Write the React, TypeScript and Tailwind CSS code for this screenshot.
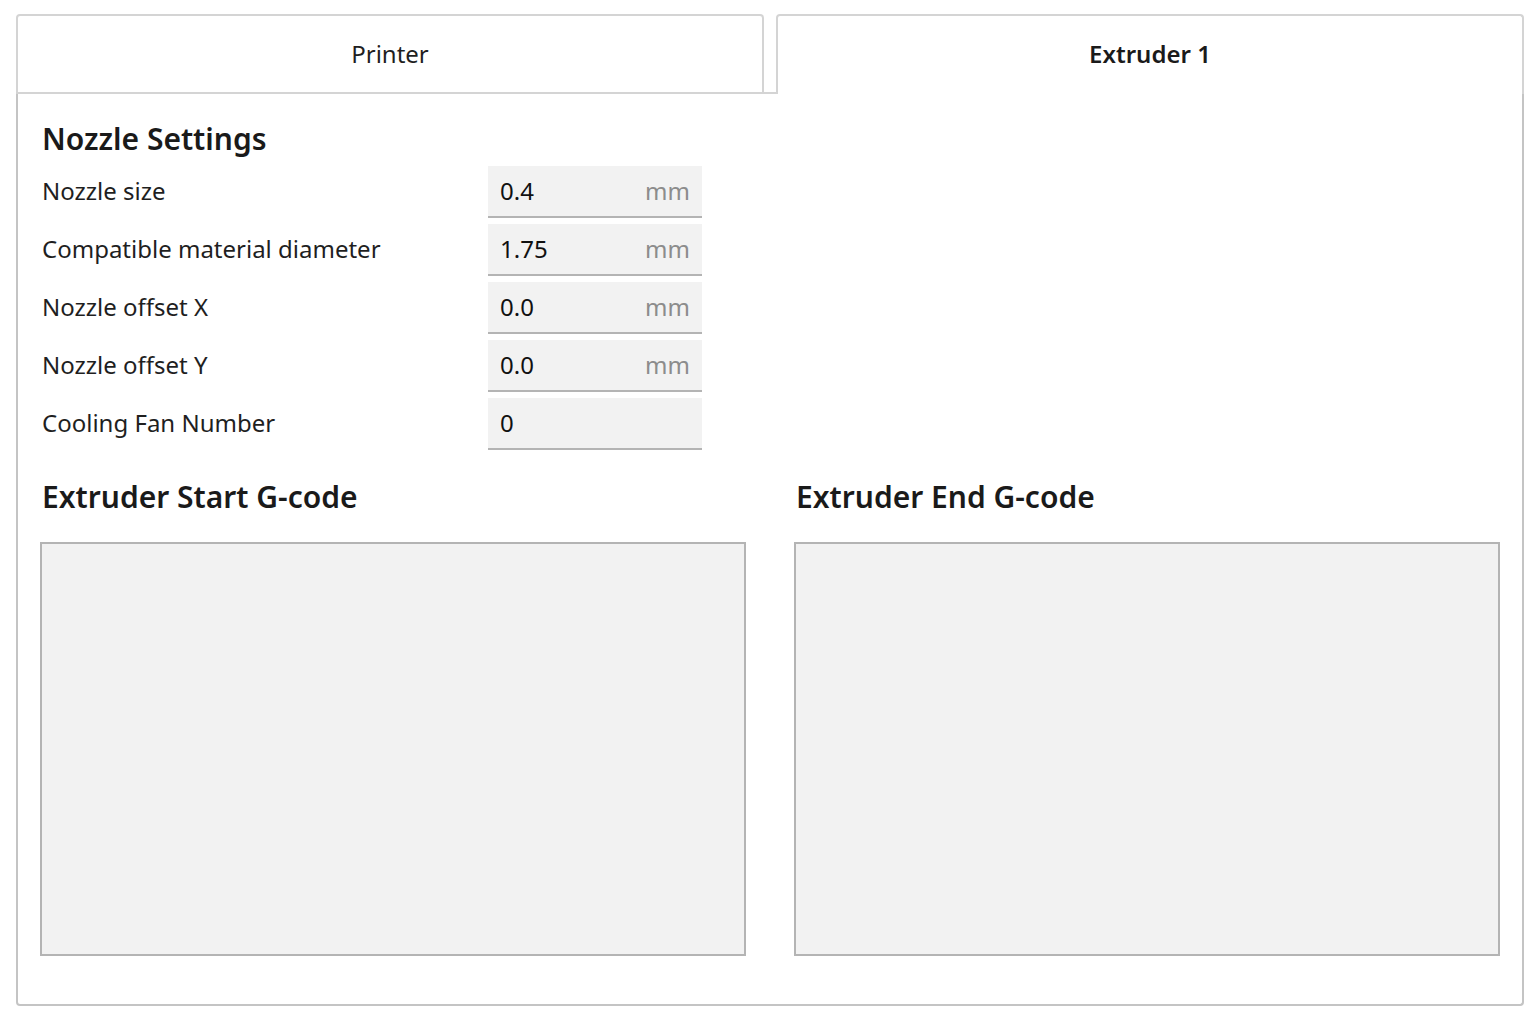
import React from 'react';

const nozzleRows = [
  { label: 'Nozzle size', value: '0.4', unit: 'mm' },
  { label: 'Compatible material diameter', value: '1.75', unit: 'mm' },
  { label: 'Nozzle offset X', value: '0.0', unit: 'mm' },
  { label: 'Nozzle offset Y', value: '0.0', unit: 'mm' },
  { label: 'Cooling Fan Number', value: '0', unit: '' },
];

function SettingRow({ label, value, unit }: { label: string; value: string; unit: string }) {
  return (
    <div className="flex items-center">
      <div className="w-[448px] pl-[2px] pb-[2px] text-[24px] leading-[32px] text-[#1f1f1f]">{label}</div>
      <div className="flex h-[52px] w-[214px] items-center justify-between border-b-2 border-[#b4b4b4] bg-[#f2f2f2] px-3">
        <span className="text-[24px] leading-[32px] text-[#111]">{value}</span>
        {unit && <span className="text-[24px] leading-[32px] text-[#8c8c8c]">{unit}</span>}
      </div>
    </div>
  );
}

function GcodeBox({ title }: { title: string }) {
  return (
    <div>
      <h2 className="pl-[2px] text-[30px] font-semibold leading-[40px] text-[#1a1a1a]">{title}</h2>
      <div className="mt-[25px] h-[414px] border-2 border-[#b4b4b4] bg-[#f2f2f2]" />
    </div>
  );
}

export default function App() {
  return (
    <div className="min-h-[1026px] bg-white pl-4 pt-[14px]" style={{ fontFamily: '"Noto Sans", "Open Sans", sans-serif' }}>
      <div className="w-[1508px]">
        <div className="flex h-[80px]">
          <div className="flex w-[748px] items-center justify-center rounded-t-[4px] border-2 border-[#d4d4d4] text-[24px] text-[#1f1f1f]">
            Printer
          </div>
          <div className="w-[12px] border-b-2 border-[#d4d4d4]" />
          <div className="flex w-[748px] items-center justify-center rounded-t-[4px] border-2 border-b-0 border-[#d4d4d4] pb-[2px] text-[24px] font-semibold text-[#1a1a1a]">
            Extruder 1
          </div>
        </div>
        <div className="rounded-b-[4px] border-2 border-t-0 border-[#c4c4c4] px-[22px] pb-[48px] pt-[25px]">
          <h2 className="pl-[2px] text-[30px] font-semibold leading-[40px] text-[#1a1a1a]">Nozzle Settings</h2>
          <div className="mt-[7px] flex flex-col gap-[6px]">
            {nozzleRows.map((row) => (
              <SettingRow key={row.label} {...row} />
            ))}
          </div>
          <div className="mt-[27px] grid grid-cols-2 gap-[48px]">
            <GcodeBox title="Extruder Start G-code" />
            <GcodeBox title="Extruder End G-code" />
          </div>
        </div>
      </div>
    </div>
  );
}
